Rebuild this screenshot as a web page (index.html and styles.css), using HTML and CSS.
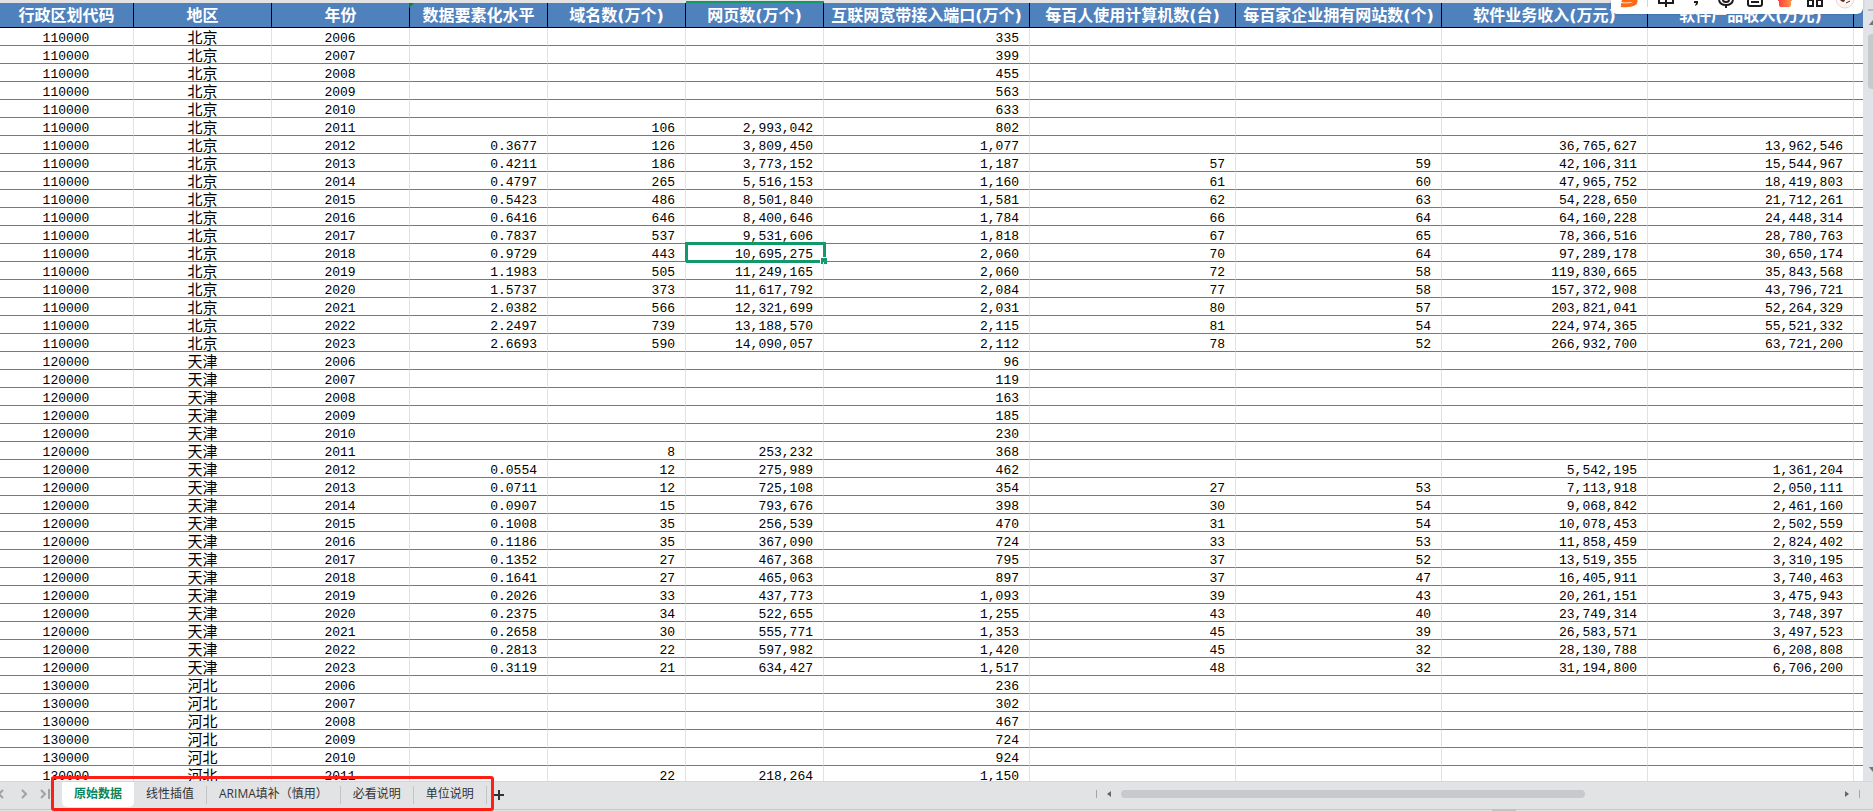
FILE: index.html
```html
<!DOCTYPE html>
<html lang="zh-CN">
<head>
<meta charset="utf-8">
<title>原始数据</title>
<link rel="stylesheet" href="styles.css">
</head>
<body>
<main class="workspace">
  <div class="sheet">
    <table class="grid">
      <colgroup>
        <col class="col-code"><col class="col-mid"><col class="col-mid"><col class="col-mid"><col class="col-mid"><col class="col-mid">
        <col class="col-wide"><col class="col-wide"><col class="col-wide"><col class="col-wide"><col class="col-wide"><col>
      </colgroup>
      <thead>
        <tr>
          <th>行政区划代码</th><th>地区</th><th>年份</th><th class="flagged">数据要素化水平</th><th>域名数(万个)</th><th class="active-col">网页数(万个)</th><th>互联网宽带接入端口(万个)</th><th>每百人使用计算机数(台)</th><th>每百家企业拥有网站数(个)</th><th>软件业务收入(万元)</th><th>软件产品收入(万元)</th><th></th>
        </tr>
      </thead>
      <tbody id="rows"></tbody>
    </table>
  </div>
  <div class="vscroll">
    <span class="vline"></span>
    <svg class="varrow" viewBox="0 0 10 6"><path d="M0 6 5 0 10 6Z"/></svg>
    <span class="vthumb"></span>
    <svg class="varrow varrow-down" viewBox="0 0 10 6"><path d="M0 0H10L5 6Z"/></svg>
  </div>
</main>
<footer class="tabbar">
  <div class="nav">
    <button class="nav-btn" aria-label="上一个"><svg viewBox="0 0 12 12"><path d="M3 2 -1 6 3 10"/></svg></button>
    <button class="nav-btn" aria-label="下一个"><svg viewBox="0 0 12 12"><path d="M1 2 5 6 1 10"/></svg></button>
    <button class="nav-btn" aria-label="最后一个"><svg viewBox="0 0 12 12"><path d="M-1 2 3 6 -1 10M7 1V11"/></svg></button>
  </div>
  <div class="tabs">
    <button class="tab tab-active">原始数据</button>
    <button class="tab">线性插值</button>
    <button class="tab">ARIMA填补（慎用）</button>
    <button class="tab">必看说明</button>
    <button class="tab">单位说明</button>
    <span class="highlight"></span>
  </div>
  <button class="add" aria-label="新建工作表"><svg viewBox="0 0 10 10"><path d="M5 0V10M0 5H10"/></svg></button>
  <div class="hscroll">
    <span class="grip"></span>
    <svg class="harrow" viewBox="0 0 4 6"><path d="M4 0V6L0 3Z"/></svg>
    <div class="track"><span class="hthumb"></span></div>
    <svg class="harrow" viewBox="0 0 4 6"><path d="M0 0V6L4 3Z"/></svg>
    <span class="grip"></span>
  </div>
</footer>
<div class="status"><span class="handle"></span></div>
<div class="ime">
  <svg class="ime-icon" viewBox="0 0 24 14"><path d="M5 0Q8 1 15 0Q20 -1 18 3Q14 6 4 5" fill="none" stroke="#ff6a13" stroke-width="4"/></svg>
  <span class="ime-sep"></span>
  <svg class="ime-icon" viewBox="0 0 24 14"><path d="M5 0V3H19V0M12 0V7" fill="none" stroke="#1b1b1b" stroke-width="2"/></svg>
  <svg class="ime-icon" viewBox="0 0 24 14"><path d="M10 1H14V3Q14 5 11 6L12 3H10Z" fill="#1b1b1b"/></svg>
  <svg class="ime-icon" viewBox="0 0 24 14"><path d="M9 0Q9 2 12 2T15 0M5 0Q6 5 12 5T19 0M12 5V8" fill="none" stroke="#1b1b1b" stroke-width="2"/></svg>
  <svg class="ime-icon" viewBox="0 0 24 14"><path d="M5 -1V4Q5 6 7 6H17Q19 6 19 4V-1M8 2H16" fill="none" stroke="#1b1b1b" stroke-width="2"/></svg>
  <svg class="ime-icon" viewBox="0 0 24 14"><defs><linearGradient id="shirt"><stop offset="0" stop-color="#ff3b3b"/><stop offset="1" stop-color="#ff9a4a"/></linearGradient></defs><path d="M5 0H19V1H18V5Q18 7 16 7H8Q6 7 6 5V1H5Z" fill="url(#shirt)"/></svg>
  <svg class="ime-icon" viewBox="0 0 24 14"><path d="M5 0H10M14 0H19M5 0V6H10V0M14 0V6H19V0" fill="none" stroke="#1b1b1b" stroke-width="2"/></svg>
  <svg class="ime-icon" viewBox="0 0 24 14"><circle cx="12" cy="-1" r="9" fill="#fff6f4" stroke="#ead6d4"/><path d="M7 0Q11 4 12 0Z" fill="#5a2b25"/><path d="M13 3 17 1" stroke="#333" stroke-width="1"/></svg>
</div>
<script src="rows.js"></script>
</body>
</html>
```

FILE: styles.css
```css
* { box-sizing: border-box; }

body {
  margin: 0;
  height: 100vh;
  display: flex;
  flex-direction: column;
  overflow: hidden;
  background: #fff;
  font-family: "Noto Sans CJK SC", sans-serif;
}

button {
  border: 0;
  padding: 0;
  background: none;
  font: inherit;
  color: inherit;
}

.workspace {
  flex: 1;
  min-height: 0;
  display: flex;
}

.sheet {
  flex: 1;
  overflow: hidden;
  padding-top: 3px;
  background: #e3e3e3;
}

.grid {
  width: 100%;
  table-layout: fixed;
  border-collapse: separate;
  border-spacing: 0;
  background: #fff;
}

.col-code { width: 134px; }
.col-mid { width: 138px; }
.col-wide { width: 206px; }

.grid th {
  position: relative;
  height: 25px;
  padding: 1px 0 0;
  background: #4f81bd;
  border-right: 1px solid #000;
  border-bottom: 1px solid #000;
  color: #fff;
  font: bold 16px/23px "DejaVu Sans", "Noto Sans CJK SC", sans-serif;
  white-space: nowrap;
}

.grid th:last-child,
.grid td:last-child { border-right: 0; }

.flagged::before {
  content: "";
  position: absolute;
  left: -1px;
  top: 0;
  border-top: 5px solid #0a8a0a;
  border-right: 5px solid transparent;
}

.active-col { box-shadow: 0 -2px #12996a; }

.grid td {
  position: relative;
  height: 18px;
  padding: 4px 10px 0 0;
  border-right: 1px solid #e2e2e2;
  border-bottom: 1px solid #4f81bd;
  color: #000;
  font: 13px/13px "Liberation Mono", monospace;
  text-align: right;
  white-space: nowrap;
}

.grid td.center {
  padding-right: 1px;
  text-align: center;
}

.grid td.region {
  padding: 0;
  text-align: center;
  font: 15px/17px "Noto Sans CJK SC", sans-serif;
}

.cursor {
  position: absolute;
  inset: -2px -3px -2px -1px;
  border: 3px solid #12996a;
}

.cursor::after {
  content: "";
  position: absolute;
  right: -4px;
  bottom: -4px;
  width: 6px;
  height: 6px;
  background: #12996a;
  border: solid #fff;
  border-width: 1px 0 0 1px;
}

.vscroll {
  width: 10px;
  display: flex;
  flex-direction: column;
  align-items: flex-end;
  overflow: hidden;
  padding: 9px 0;
  background: #e1e3e8;
}

.vline {
  width: 5px;
  height: 2px;
  background: #bbb;
}

.varrow {
  width: 10px;
  height: 5px;
  margin: 9px -5px 9px 0;
  fill: #777;
  flex: none;
}

.varrow-down { margin: auto -5px 0 0; }

.vthumb {
  width: 5px;
  height: 55px;
  border-radius: 4px 0 0 4px;
  background: #c8c9cc;
}

.tabbar {
  height: 28px;
  flex: none;
  display: flex;
  align-items: stretch;
  background: #e2e3e5;
  border-top: 1px solid #d6d6d6;
}

.nav {
  width: 62px;
  padding-bottom: 4px;
  display: flex;
  align-items: center;
  gap: 8px;
}

.nav-btn {
  width: 12px;
  height: 12px;
  margin-right: 1px;
}

.nav-btn svg {
  display: block;
  width: 12px;
  height: 12px;
  overflow: visible;
  fill: none;
  stroke: #a2a2a2;
  stroke-width: 2;
}

.tabs {
  position: relative;
  display: flex;
}

.tab {
  position: relative;
  height: 25px;
  padding: 0 12px 2px;
  font-family: "Open Sans", "Noto Sans CJK SC", sans-serif;
  font-size: 12px;
  line-height: 20px;
  color: #333;
}

.tab + .tab { padding-right: 13px; }

.tab + .tab::after {
  content: "";
  position: absolute;
  right: 0;
  top: 4px;
  width: 1px;
  height: 18px;
  background: #c4c4c4;
}

.tab-active {
  background: #fff;
  border-radius: 0 0 5px 5px;
  color: #0b8457;
  font-weight: bold;
}

.highlight {
  position: absolute;
  inset: -6px -7px -2px -11px;
  border: 3px solid #ff1e14;
  border-radius: 3px;
  pointer-events: none;
  z-index: 1;
}

.add {
  width: 10px;
  margin-left: 7px;
  padding-bottom: 2px;
}

.add svg {
  display: block;
  width: 10px;
  height: 10px;
  stroke: #333;
  stroke-width: 2;
}

.hscroll {
  width: 42%;
  margin-left: auto;
  padding: 0 13px 4px 10px;
  display: flex;
  align-items: center;
  gap: 8px;
}

.grip {
  width: 1px;
  height: 8px;
  background: #a5a5a5;
}

.harrow {
  width: 4px;
  height: 6px;
  margin: 0 2px;
  fill: #666;
}

.track {
  flex: 1;
  height: 8px;
}

.hthumb {
  display: block;
  width: 65%;
  height: 8px;
  border-radius: 4px;
  background: #c8c9cc;
}

.status {
  height: 2px;
  flex: none;
  display: flex;
  justify-content: flex-end;
  padding-right: 357px;
  background: #e2e3e5;
  border-top: 1px solid #c6c7c9;
}

.handle {
  width: 24px;
  height: 2px;
  margin-top: -1px;
  background: #c2c2c4;
}

.ime {
  position: absolute;
  top: 0;
  right: 10px;
  width: 252px;
  height: 14px;
  padding: 0 6px;
  display: flex;
  justify-content: space-between;
  background: #fff;
  border-radius: 0 0 6px 6px;
  box-shadow: 0 0 3px #0003;
  overflow: hidden;
}

.ime-icon {
  width: 24px;
  height: 14px;
}

.ime-sep {
  width: 1px;
  height: 7px;
  background: #d5d5d5;
}
```

FILE: rows.js
```js
// Each line: year | level | domains | pages | ports | computers | websites | software revenue | product revenue
const regions = [
  ["110000", "北京", `2006||||335
2007||||399
2008||||455
2009||||563
2010||||633
2011||106|2,993,042|802
2012|0.3677|126|3,809,450|1,077|||36,765,627|13,962,546
2013|0.4211|186|3,773,152|1,187|57|59|42,106,311|15,544,967
2014|0.4797|265|5,516,153|1,160|61|60|47,965,752|18,419,803
2015|0.5423|486|8,501,840|1,581|62|63|54,228,650|21,712,261
2016|0.6416|646|8,400,646|1,784|66|64|64,160,228|24,448,314
2017|0.7837|537|9,531,606|1,818|67|65|78,366,516|28,780,763
2018|0.9729|443|10,695,275|2,060|70|64|97,289,178|30,650,174
2019|1.1983|505|11,249,165|2,060|72|58|119,830,665|35,843,568
2020|1.5737|373|11,617,792|2,084|77|58|157,372,908|43,796,721
2021|2.0382|566|12,321,699|2,031|80|57|203,821,041|52,264,329
2022|2.2497|739|13,188,570|2,115|81|54|224,974,365|55,521,332
2023|2.6693|590|14,090,057|2,112|78|52|266,932,700|63,721,200`],
  ["120000", "天津", `2006||||96
2007||||119
2008||||163
2009||||185
2010||||230
2011||8|253,232|368
2012|0.0554|12|275,989|462|||5,542,195|1,361,204
2013|0.0711|12|725,108|354|27|53|7,113,918|2,050,111
2014|0.0907|15|793,676|398|30|54|9,068,842|2,461,160
2015|0.1008|35|256,539|470|31|54|10,078,453|2,502,559
2016|0.1186|35|367,090|724|33|53|11,858,459|2,824,402
2017|0.1352|27|467,368|795|37|52|13,519,355|3,310,195
2018|0.1641|27|465,063|897|37|47|16,405,911|3,740,463
2019|0.2026|33|437,773|1,093|39|43|20,261,151|3,475,943
2020|0.2375|34|522,655|1,255|43|40|23,749,314|3,748,397
2021|0.2658|30|555,771|1,353|45|39|26,583,571|3,497,523
2022|0.2813|22|597,982|1,420|45|32|28,130,788|6,208,808
2023|0.3119|21|634,427|1,517|48|32|31,194,800|6,706,200`],
  ["130000", "河北", `2006||||236
2007||||302
2008||||467
2009||||724
2010||||924
2011||22|218,264|1,150`]
];

const body = document.getElementById("rows");
for (const [code, name, lines] of regions) {
  for (const line of lines.split("\n")) {
    const values = [code, name, ...line.split("|")];
    const row = body.insertRow();
    for (let i = 0; i < 12; i++) {
      const cell = row.insertCell();
      cell.textContent = values[i] || "";
      if (i === 1) cell.className = "region";
      else if (i < 3) cell.className = "center";
      if (values[i] === "10,695,275") {
        const cursor = document.createElement("span");
        cursor.className = "cursor";
        cell.append(cursor);
      }
    }
  }
}
```
